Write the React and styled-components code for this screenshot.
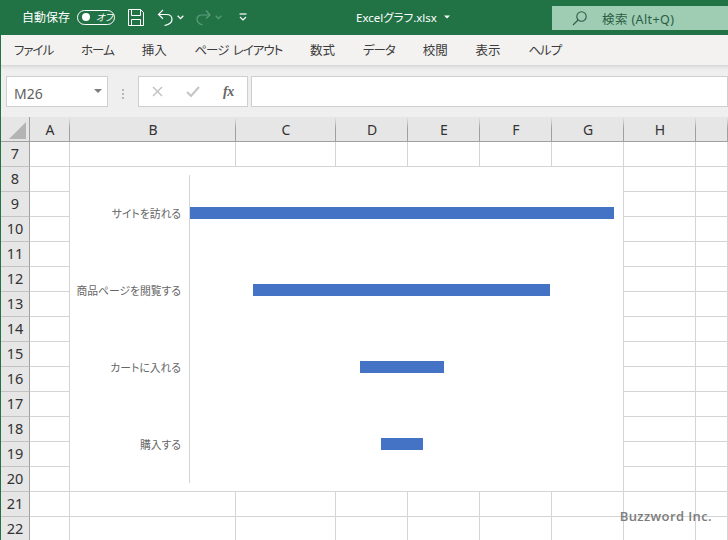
import React from 'react';
import styled, { createGlobalStyle } from 'styled-components';

const FONT = `"Noto Sans", "Noto Sans CJK JP", sans-serif`;

const Global = createGlobalStyle`
  html, body { margin: 0; padding: 0; background: #fff; }
  body { font-family: ${FONT}; overflow: hidden; }
  * { box-sizing: border-box; }
`;

const Page = styled.div`
  width: 728px;
  height: 540px;
  overflow: hidden;
  border-left: 1px solid #217346;
  display: flex;
  flex-direction: column;
`;

const TitleBar = styled.div`
  height: 35px;
  margin-left: -1px;
  background: #217346;
  color: #fff;
  display: flex;
  align-items: center;
  padding: 0 0 1px 22px;
  flex: none;
`;
const QuickAccess = styled.div`
  width: 334px;
  flex: none;
  display: flex;
  align-items: center;
`;
const AutoSave = styled.span`
  font-size: 12px;
  width: 55px;
  flex: none;
`;
const Toggle = styled.span`
  width: 38px;
  height: 15px;
  border: 1.2px solid #fff;
  border-radius: 8px;
  display: flex;
  align-items: center;
  padding-left: 4px;
  gap: 6px;
  font-size: 9.5px;
  font-style: italic;
  font-feature-settings: "palt";
  flex: none;
`;
const Knob = styled.i`
  width: 8px;
  height: 8px;
  border-radius: 50%;
  background: #fff;
  flex: none;
`;
const Glyph = styled.svg`
  flex: none;
  display: block;
  margin-left: ${p => p.$ml || 0}px;
`;
const FileName = styled.div`
  width: 196px;
  flex: none;
  font-size: 11.5px;
  font-feature-settings: "palt";
  line-height: 17px;
  white-space: nowrap;
  display: flex;
  align-items: center;
  gap: 7px;
`;
const SearchBox = styled.div`
  width: 176px;
  height: 24px;
  align-self: flex-start;
  margin-top: 6px;
  background: #9fcdb3;
  color: #2a5d44;
  display: flex;
  align-items: center;
  padding-left: 20px;
  gap: 15px;
  font-size: 12.5px;
  letter-spacing: 0.4px;
  flex: none;
`;

const Tabs = styled.div`
  height: 30px;
  background: #f3f2f1;
  display: flex;
  align-items: center;
  flex: none;
  padding: 0 0 1px 13px;
  gap: 27.8px;
`;
const Tab = styled.span`
  font-size: 12.5px;
  color: #3c3c3c;
  font-feature-settings: "palt";
  white-space: nowrap;
  word-spacing: 2px;
  letter-spacing: ${p => (p.$kana ? '-1px' : '0')};
`;

const FormulaArea = styled.div`
  height: 52px;
  flex: none;
  background: linear-gradient(#d6d6d6 0, #e9e9e9 3px, #efefef 6px);
  display: flex;
  align-items: flex-start;
  padding: 11px 0 0 5px;
`;
const FieldBox = styled.div`
  height: 31px;
  background: #fff;
  border: 1px solid #cfcfcf;
  width: ${p => p.$w}px;
  flex: ${p => (p.$grow ? 1 : 'none')};
  margin-left: ${p => p.$ml || 0}px;
  display: flex;
  align-items: center;
`;
const NameText = styled.span`
  font-size: 14px;
  color: #5f5f5f;
  margin: 3px 0 0 7px;
  flex: 1;
`;
const Caret = styled.i`
  width: 0;
  height: 0;
  border-left: 4px solid transparent;
  border-right: 4px solid transparent;
  border-top: 4px solid #7d7d7d;
  margin: 0 5px 2px 0;
`;
const Dots = styled.div`
  width: 2px;
  margin-left: 14px;
  align-self: center;
  margin-top: -5px;
  display: flex;
  flex-direction: column;
  gap: 2px;
  & i { display: block; width: 2px; height: 2px; background: #b8b8b8; }
`;
const Fx = styled.span`
  font-family: "Liberation Serif", serif;
  font-style: italic;
  font-size: 14px;
  font-weight: 700;
  color: #666;
  margin-left: 23px;
  letter-spacing: -0.5px;
`;

const Sheet = styled.div`
  position: relative;
  flex: 1;
  margin-left: -1px;
  display: grid;
  grid-template-columns: 30px 40px 166px 100px 72px 72px 72px 72px 72px 32px;
  grid-template-rows: 25px repeat(16, 25px);
  background: #fff;
`;
const Corner = styled.div`
  background: #e6e6e6;
  border-right: 1px solid #a0a0a0;
  border-bottom: 1px solid #a0a0a0;
  display: flex;
  align-items: flex-end;
  justify-content: flex-end;
  padding: 0 3px 2px 0;
`;
const ColHead = styled.div`
  background: #e6e6e6;
  border-bottom: 1px solid #a0a0a0;
  font-size: 14px;
  color: #333;
  display: flex;
  align-items: center;
  justify-content: center;
  position: relative;
  &::after {
    content: '';
    position: absolute;
    right: 0;
    top: 0;
    bottom: -1px;
    width: 1px;
    background: linear-gradient(#e6e6e6, #a0a0a0 45%);
  }
`;
const RowHead = styled.div`
  background: #e6e6e6;
  border-right: 1px solid #a0a0a0;
  border-bottom: 1px solid #c2c2c2;
  border-left: 1px solid #217346;
  font-size: 14.5px;
  color: #333;
  display: flex;
  align-items: center;
  justify-content: center;
  padding-bottom: 2px;
`;
const Cell = styled.div`
  border-right: 1px solid #d4d4d4;
  border-bottom: 1px solid #d4d4d4;
`;

const Chart = styled.div`
  position: absolute;
  left: 70px;
  top: 50px;
  width: 553px;
  height: 324px;
  background: #fff;
  display: grid;
  grid-template-columns: 119px 1fr;
  grid-template-rows: repeat(4, 77px);
  padding-top: 8px;
`;
const Label = styled.div`
  font-size: 10.8px;
  color: #666;
  text-align: right;
  padding-right: 8px;
  align-self: center;
  white-space: nowrap;
  line-height: 14px;
  font-feature-settings: "palt";
`;
const Track = styled.div`
  border-left: 1px solid #d4d4d4;
  padding-top: 32px;
`;
const Bar = styled.div`
  height: 12px;
  background: #4472c4;
  margin-left: ${p => p.$start}px;
  width: ${p => p.$w}px;
`;
const Mark = styled.div`
  position: absolute;
  right: 16px;
  bottom: 17px;
  font-size: 13px;
  font-weight: 600;
  letter-spacing: 0.4px;
  color: #7c7c7c;
  font-family: "Open Sans", sans-serif;
  line-height: 18px;
  white-space: nowrap;
`;

const cols = ['A', 'B', 'C', 'D', 'E', 'F', 'G', 'H', ''];
const rows = Array.from({ length: 16 }, (_, i) => i + 7);
const tabs = [
  ['ファイル', true], ['ホーム', true], ['挿入', false], ['ページ レイアウト', true], ['数式', false],
  ['データ', true], ['校閲', false], ['表示', false], ['ヘルプ', true],
];
const chart = [
  ['サイトを訪れる', 0, 424],
  ['商品ページを閲覧する', 63, 297],
  ['カートに入れる', 170, 84],
  ['購入する', 191, 42],
];

const Chev = ({ ml, color = '#fff' }) => (
  <Glyph $ml={ml} width="7" height="5" viewBox="0 0 7 5" fill="none" stroke={color} strokeWidth="1.3">
    <path d="M0.7 0.8 L3.5 3.6 L6.3 0.8" />
  </Glyph>
);

export default function App() {
  return (
    <Page>
      <Global />
      <TitleBar>
        <QuickAccess>
          <AutoSave>自動保存</AutoSave>
          <Toggle><Knob /><span>オフ</span></Toggle>
          <Glyph $ml={13} width="16" height="17" viewBox="0 0 16 17" fill="none" stroke="#fff" strokeWidth="1">
            <path d="M0.5 0.5 H12.5 L15.5 3.5 V16.5 H0.5 Z" />
            <path d="M3.5 0.5 V6.5 H12.5 V0.5" />
            <path d="M3.5 16.5 V10.5 H12.5 V16.5" />
          </Glyph>
          <Glyph $ml={13} width="16" height="17" viewBox="0 0 16 17" fill="none" stroke="#fff" strokeWidth="1.2">
            <path d="M1.5 5.5 H9.5 C13 5.5 15 7.5 15 10.5 C15 13.5 12 15.5 7.5 16.5" />
            <path d="M6 0.8 L1.5 5.5 L6 9.8" />
          </Glyph>
          <Chev ml={4} />
          <Glyph $ml={12} width="15" height="17" viewBox="0 0 15 17" fill="none" stroke="#5d9c7b" strokeWidth="1.2">
            <path d="M14 6 H6 C2.5 6 1 8 1 10.5 C1 13 3.5 15 6.5 16" />
            <path d="M10 1.5 L14 6 L10 9.5" />
          </Glyph>
          <Chev ml={4} color="#5d9c7b" />
          <Glyph $ml={17} width="8" height="8" viewBox="0 0 8 8" fill="none" stroke="#fff" strokeWidth="1.2">
            <path d="M0.5 1 H7.5" />
            <path d="M1 4 L4 7 L7 4" />
          </Glyph>
        </QuickAccess>
        <FileName>
          <span>Excelグラフ.xlsx</span>
          <svg width="6" height="4" viewBox="0 0 6 4"><path d="M0 0.5 H6 L3 3.5 Z" fill="#fff" /></svg>
        </FileName>
        <SearchBox>
          <svg width="15" height="15" viewBox="0 0 15 15" fill="none" stroke="#2a5d44" strokeWidth="1.1">
            <circle cx="9.5" cy="5.5" r="4.7" />
            <path d="M6 9 L1 14" />
          </svg>
          <span>検索 (Alt+Q)</span>
        </SearchBox>
      </TitleBar>
      <Tabs>
        {tabs.map(([t, kana]) => <Tab key={t} $kana={kana}>{t}</Tab>)}
      </Tabs>
      <FormulaArea>
        <FieldBox $w={102}>
          <NameText>M26</NameText>
          <Caret />
        </FieldBox>
        <Dots><i /><i /><i /></Dots>
        <FieldBox $w={110} $ml={14}>
          <Glyph $ml={13} width="11" height="11" viewBox="0 0 11 11" fill="none" stroke="#c4c4c4" strokeWidth="1.5">
            <path d="M1 1 L10 10 M10 1 L1 10" />
          </Glyph>
          <Glyph $ml={23} width="14" height="11" viewBox="0 0 14 11" fill="none" stroke="#c4c4c4" strokeWidth="2">
            <path d="M1 6 L5 10 L13 1" />
          </Glyph>
          <Fx>fx</Fx>
        </FieldBox>
        <FieldBox $grow $ml={3} />
      </FormulaArea>
      <Sheet>
        <Corner>
          <svg width="17" height="17" viewBox="0 0 17 17"><path d="M17 0 V17 H0 Z" fill="#b4b4b4" /></svg>
        </Corner>
        {cols.map((c, i) => <ColHead key={i}>{c}</ColHead>)}
        {rows.map(r => (
          <React.Fragment key={r}>
            <RowHead>{r}</RowHead>
            {cols.map((_, i) => <Cell key={i} />)}
          </React.Fragment>
        ))}
        <Chart>
          {chart.map(([label, start, w]) => (
            <React.Fragment key={label}>
              <Label>{label}</Label>
              <Track><Bar $start={start} $w={w} /></Track>
            </React.Fragment>
          ))}
        </Chart>
        <Mark>Buzzword Inc.</Mark>
      </Sheet>
    </Page>
  );
}
